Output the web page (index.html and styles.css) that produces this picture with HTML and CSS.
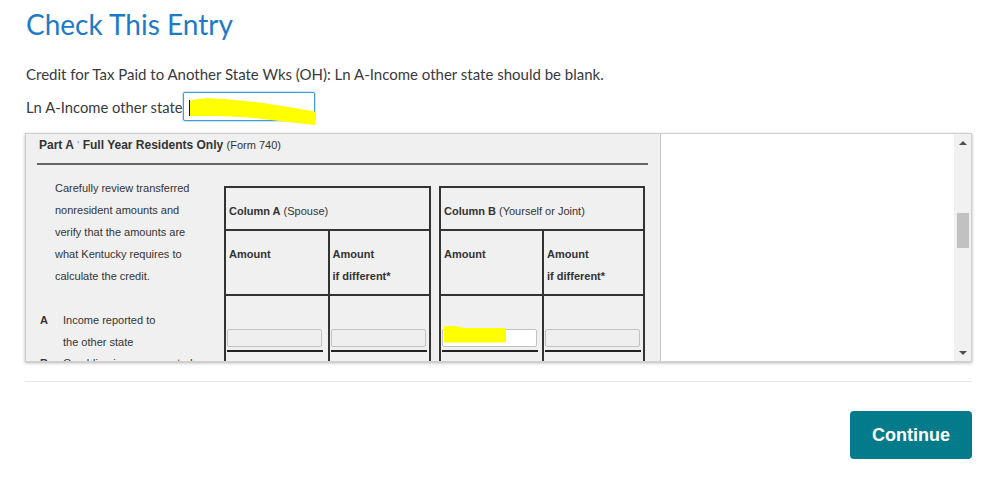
FILE: index.html
```html
<!DOCTYPE html>
<html>
<head>
<meta charset="utf-8">
<link rel="stylesheet" href="styles.css">
</head>
<body>
<div class="page">
  <h1 class="title">Check This Entry</h1>
  <p class="msg">Credit for Tax Paid to Another State Wks (OH): Ln A-Income other state should be blank.</p>
  <div class="field">
    <span class="field-label">Ln A-Income other state</span>
    <span class="input-wrap">
      <span class="input-box"></span>
      <svg class="hl" viewBox="0 0 134 36" width="134" height="36"><path d="M7 9 C12 7 22 6 31 6.5 C60 8 90 12 132 19.7 L132 33 C110 31 90 28 70 26 C50 24 25 24 7 24 Z" fill="#ffff00"/></svg>
      <span class="caret"></span>
    </span>
  </div>

  <div class="frame">
    <div class="viewport">
      <div class="form">
        <div class="part-head"><b>Part A</b> <span class="tick">'</span> <b>Full Year Residents Only</b> <span class="form-no">(Form 740)</span></div>
        <div class="part-rule"></div>
        <div class="form-body">
          <div class="left-col">
            <div class="intro">Carefully review transferred<br>nonresident amounts and<br>verify that the amounts are<br>what Kentucky requires to<br>calculate the credit.</div>
            <div class="line-item"><span class="ln">A</span><span>Income reported to<br>the other state</span></div>
            <div class="line-item next"><span class="ln">B</span><span>Gambling income reported</span></div>
          </div>
          <div class="coltable">
            <div class="ch"><b>Column A</b> (Spouse)</div>
            <div class="sub"><b>Amount</b></div>
            <div class="sub div"><b>Amount<br>if different*</b></div>
            <div class="cell"><span class="amt"></span><span class="uline"></span></div>
            <div class="cell div"><span class="amt"></span><span class="uline"></span></div>
          </div>
          <div class="coltable colb">
            <div class="ch"><b>Column B</b> (Yourself or Joint)</div>
            <div class="sub"><b>Amount</b></div>
            <div class="sub div"><b>Amount<br>if different*</b></div>
            <div class="cell"><span class="amt active"><svg class="hl2" viewBox="0 0 94 18" width="94" height="18"><path d="M2 1 L2 -2.5 C8 -3.5 16 -3 21 -1 L64 -1 L64 13.5 L2 13.5 Z" fill="#ffff00"/></svg></span><span class="uline"></span></div>
            <div class="cell div"><span class="amt"></span><span class="uline"></span></div>
          </div>
        </div>
      </div>
      <div class="blank"></div>
    </div>
    <div class="scrollbar">
      <span class="sb-btn"><span class="tri up"></span></span>
      <span class="sb-track"><span class="sb-thumb"></span></span>
      <span class="sb-btn"><span class="tri down"></span></span>
    </div>
  </div>

  <div class="divider"></div>
  <div class="actions"><button class="continue">Continue</button></div>
</div>
</body>
</html>
```
FILE: styles.css
```css
html, body { margin: 0; padding: 0; background: #fff; }
body { font-family: Lato, "Open Sans", sans-serif; color: #393a3d; }
.page { padding: 0 27px 0 25px; }

.title {
  margin: 0;
  padding-left: 1px;
  font-family: Lato, sans-serif;
  font-weight: 400;
  font-size: 28px;
  line-height: 48px;
  color: #1e7ac7;
}
.msg {
  margin: 16px 0 0;
  padding-left: 1px;
  font-size: 15px;
  line-height: 20px;
}
.field {
  margin-top: 8px;
  padding-left: 1px;
  display: flex;
  align-items: center;
  height: 29px;
  font-size: 14.8px;
}
.field-label { margin-right: 0; }
.input-wrap { position: relative; width: 132px; height: 29px; }
.input-box {
  display: block;
  box-sizing: border-box;
  width: 132px; height: 29px;
  border: 1px solid #3d9be0;
  box-shadow: 0 0 0 1px rgba(61,155,224,0.25);
  border-radius: 2px;
  background: #fff;
}
.hl { position: absolute; left: 0; top: 0; overflow: visible; }
.caret { position: absolute; left: 6px; top: 8px; width: 1px; height: 16px; background: #111; }

.frame {
  margin-top: 12px;
  height: 229px;
  box-sizing: border-box;
  border: 1px solid #cfcfcf;
  box-shadow: 0 1px 3px rgba(0,0,0,0.3);
  display: flex;
  overflow: hidden;
}
.viewport { flex: 1; display: flex; overflow: hidden; }
.form {
  width: 634px;
  flex: none;
  background: #f0f0f0;
  border-right: 1px solid #c4c4c4;
  box-shadow: 1px 0 2px rgba(0,0,0,0.12);
  font-family: "Liberation Sans", Arial, sans-serif;
  color: #333;
  font-size: 11px;
  overflow: hidden;
}
.blank { flex: 1; background: #fff; }
.part-head { padding-left: 13px; line-height: 22px; font-size: 12px; color: #333; }
.part-head .tick { color: #999; font-size: 11px; }
.part-head .form-no { font-size: 11px; }
.part-rule { margin: 7px 0 0 11px; width: 611px; height: 2px; background: #666; }
.form-body { margin-top: 12px; display: flex; padding-left: 14px; }
.left-col { width: 184px; flex: none; line-height: 22px; }
.intro { padding-left: 15px; }
.line-item { display: flex; margin-top: 23px; line-height: 21.5px; }
.line-item.next { margin-top: 0; }
.ln { width: 23px; font-weight: bold; }

.coltable {
  margin-top: 9px;
  width: 207px;
  box-sizing: border-box;
  border: 2px solid #333;
  border-bottom: none;
  display: grid;
  grid-template-columns: 1fr 1fr;
  grid-template-rows: 43px 65px 80px;
  align-self: flex-start;
}
.coltable.colb { margin-left: 8px; width: 206px; }
.ch { grid-column: 1 / 3; border-bottom: 2px solid #333; padding: 15px 0 0 3px; line-height: 16px; }
.sub { border-bottom: 2px solid #333; padding: 12px 0 0 3px; line-height: 22px; }
.div { border-left: 2px solid #333; }
.cell { padding: 33px 0 0 1px; }
.amt {
  position: relative;
  display: block;
  box-sizing: border-box;
  width: 95px; height: 18px;
  border: 1px solid #c2c2c2;
  border-radius: 2px;
  background: #efefef;
}
.amt.active { background: #fff; }
.hl2 { position: absolute; left: -1px; top: -1px; overflow: visible; }
.uline { display: block; margin-top: 3px; width: 96px; height: 2px; background: #222; }

.scrollbar {
  width: 17px;
  flex: none;
  background: #f1f1f1;
  display: flex;
  flex-direction: column;
}
.sb-btn { height: 17px; display: flex; align-items: center; justify-content: center; }
.tri { width: 0; height: 0; border-left: 4px solid transparent; border-right: 4px solid transparent; }
.tri.up { border-bottom: 4px solid #505050; }
.tri.down { border-top: 4px solid #505050; }
.sb-track { flex: 1; }
.sb-thumb { display: block; margin: 62px 2px 0 3px; height: 35px; background: #c1c1c1; }

.divider { margin-top: 19px; height: 1px; background: #e6e6e6; }
.actions { display: flex; justify-content: flex-end; margin-top: 29px; }
.continue {
  width: 122px; height: 48px;
  border: none;
  border-radius: 4px;
  background: #037b8b;
  color: #fff;
  font-family: "Liberation Sans", Arial, sans-serif;
  font-weight: bold;
  font-size: 18px;
  padding: 0;
}
```
